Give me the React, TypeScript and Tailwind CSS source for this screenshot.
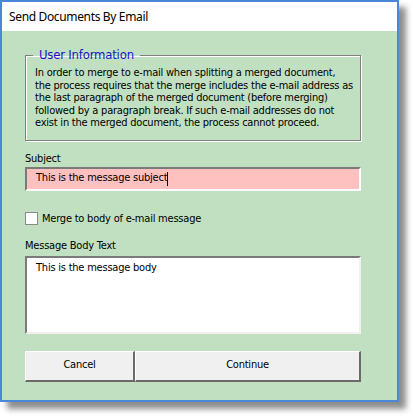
export default function App() {
  const ui = { fontFamily: '"DejaVu Sans Condensed", "DejaVu Sans", sans-serif' };
  return (
    <div className="w-[413px] h-[416px] bg-white relative overflow-hidden" style={ui}>
      <div className="w-[399px] h-[402px] border-2 border-[#4b87d8] flex flex-col shadow-[7px_7px_6px_rgba(0,0,0,0.45)]">
        <div
          className="h-[29px] shrink-0 bg-white flex items-center pl-[7px] text-[12px] tracking-[-0.35px] text-black"
          style={{ fontFamily: '"Noto Sans", sans-serif' }}
        >
          Send Documents By Email
        </div>
        <div className="flex-1 bg-[#c1e0c1] pl-[23px] pt-[17px] text-[11px] tracking-[-0.22px] text-black">
          <div className="w-[336px] flex flex-col">
            <fieldset className="border border-[#808080] shadow-[1px_1px_0_#ffffff,inset_1px_1px_0_#ffffff] pl-[9px] pr-[4px] pt-[5px] pb-[10px]">
              <legend className="ml-[-2px] px-[6px] text-[13px] leading-[14px] tracking-[-0.2px] text-[#1414c8]">User Information</legend>
              <div className="leading-[12.5px] whitespace-nowrap">
                In order to merge to e-mail when splitting a merged document,
                <br />
                the process requires that the merge includes the e-mail address as
                <br />
                the last paragraph of the merged document (before merging)
                <br />
                followed by a paragraph break. If such e-mail addresses do not
                <br />
                exist in the merged document, the process cannot proceed.
              </div>
            </fieldset>
            <div className="mt-[11px] leading-[13px]">Subject</div>
            <div className="mt-[2px] h-[24px] bg-[#ffc0c0] border-2 border-t-[#7a7a7a] border-l-[#7a7a7a] border-b-white border-r-white flex items-center pl-[9px]">
              <span>This is the message subject</span>
              <span className="inline-block w-px h-[14px] bg-black" />
            </div>
            <div className="mt-[21px] flex items-center h-[13px]">
              <div className="w-[13px] h-[13px] bg-white border border-[#8a8a8a]" />
              <span className="ml-[4px] leading-[13px]">Merge to body of e-mail message</span>
            </div>
            <div className="mt-[14px] leading-[13px]">Message Body Text</div>
            <div className="mt-[4px] h-[78px] bg-white border-2 border-t-[#7a7a7a] border-l-[#7a7a7a] border-b-[#f0f0f0] border-r-[#f0f0f0] pl-[9px] pt-[3px] leading-[13px]">
              This is the message body
            </div>
            <div className="mt-[17px] flex h-[31px]">
              <button className="w-[110px] h-full bg-[#f0f0f0] border-t border-l border-t-white border-l-white border-b-2 border-r-2 border-b-[#6a6a6a] border-r-[#6a6a6a] text-[11px] tracking-[-0.22px]">
                Cancel
              </button>
              <button className="flex-1 h-full bg-[#f0f0f0] border-t border-l border-t-white border-l-white border-b-2 border-r-2 border-b-[#6a6a6a] border-r-[#6a6a6a] text-[11px] tracking-[-0.22px]">
                Continue
              </button>
            </div>
          </div>
        </div>
      </div>
    </div>
  );
}
